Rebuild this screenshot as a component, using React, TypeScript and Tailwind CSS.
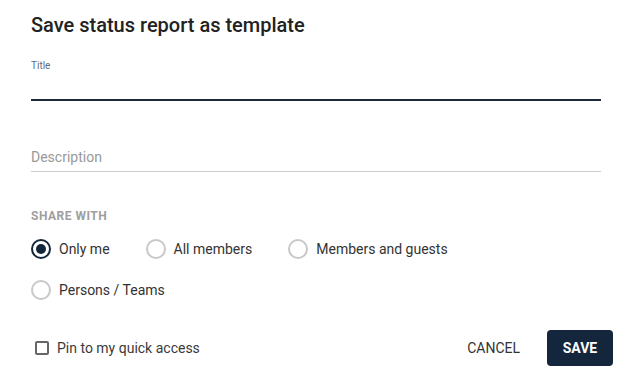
import React from "react";

function Radio({ label, checked }: { label: string; checked?: boolean }) {
  return (
    <div className="flex items-center h-[20px] mr-[36px]">
      <span
        className={
          "flex items-center justify-center w-[20px] h-[20px] rounded-full border-2 " +
          (checked ? "border-[#13263b]" : "border-[#c8c8c8]")
        }
      >
        {checked && <span className="w-[10px] h-[10px] rounded-full bg-[#13263b]" />}
      </span>
      <span className="ml-[8px] text-[14px] leading-[20px] text-[#333333]">{label}</span>
    </div>
  );
}

export default function App() {
  return (
    <div className="w-[629px] h-[382px] bg-white font-['Roboto',sans-serif] pl-[31px] pr-[28px] overflow-hidden">
      <h1 className="pt-[11px] text-[20px] leading-[28px] font-medium text-[#222222]">
        Save status report as template
      </h1>

      <div className="mt-[21px]">
        <div className="text-[10px] leading-[12px] text-[#5f6b7a]">Title</div>
        <div className="h-[29px] border-b-2 border-[#1a2a3a]" />
      </div>

      <div className="mt-[40px] h-[31px] pt-[6px] border-b border-[#cccccc]">
        <div className="text-[14px] leading-[20px] text-[#999999]">Description</div>
      </div>

      <div className="mt-[36px] text-[12px] leading-[16px] font-bold tracking-[0.5px] text-[#9e9e9e]">
        SHARE WITH
      </div>

      <div className="mt-[15px] flex flex-wrap gap-y-[21px]">
        <Radio label="Only me" checked />
        <Radio label="All members" />
        <Radio label="Members and guests" />
        <Radio label="Persons / Teams" />
      </div>

      <div className="mt-[30px] mr-[-12px] flex items-center h-[36px]">
        <div className="flex items-center ml-[4px]">
          <span className="w-[14px] h-[14px] border-2 border-[#666666] rounded-[2px]" />
          <span className="ml-[8px] text-[14px] leading-[20px] text-[#3a3a3a]">Pin to my quick access</span>
        </div>
        <div className="ml-auto flex items-center">
          <span className="text-[14px] leading-[20px] text-[#333333] mr-[27px]">CANCEL</span>
          <button className="w-[66px] h-[36px] rounded-[4px] bg-[#13263b] text-white text-[14px] font-bold">
            SAVE
          </button>
        </div>
      </div>
    </div>
  );
}
